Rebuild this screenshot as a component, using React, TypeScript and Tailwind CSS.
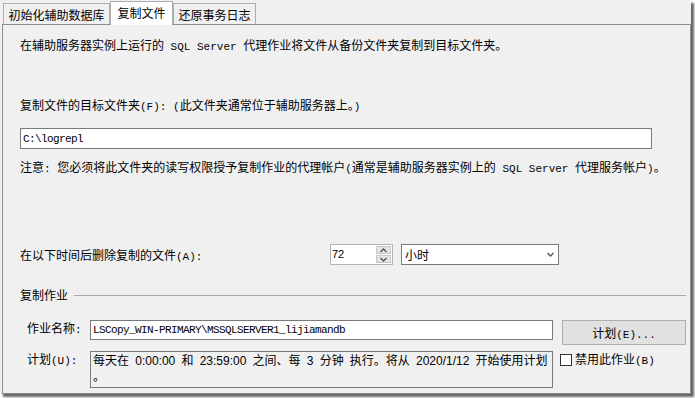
import React from "react";

const cjk = "font-['Noto_Sans_CJK_SC','Noto_Sans',sans-serif]";

function M({ children, tight = false }: { children: React.ReactNode; tight?: boolean }) {
  return (
    <span
      className={`font-['Liberation_Mono',monospace] text-[11px] leading-[16px] ${
        tight ? "tracking-[-0.6px]" : ""
      }`}
    >
      {children}
    </span>
  );
}

function S({ children }: { children: React.ReactNode }) {
  return <span className="font-['Liberation_Sans',sans-serif] leading-[14px]">{children}</span>;
}

function Chevron({ up = false }: { up?: boolean }) {
  return (
    <svg width="7" height="5" viewBox="0 0 7 5">
      <path
        d={up ? "M0.5 4 L3.5 1 L6.5 4" : "M0.5 1 L3.5 4 L6.5 1"}
        fill="none"
        stroke="#555"
        strokeWidth="1.4"
      />
    </svg>
  );
}

export default function App() {
  return (
    <div className={`w-[695px] h-[398px] bg-white text-[12px] leading-[16px] text-black ${cjk}`}>
      <div className="w-[691px] h-[394px] bg-[#f0f0f0] flex flex-col shadow-[3px_3px_2px_rgba(0,0,0,0.6)]">
        {/* tabs */}
        <div className="relative z-10 flex items-end h-[24px] pl-[3px]">
          <div className="w-[107px] h-[21px] border border-b-0 border-[#adadad] flex items-center justify-center pt-[1px]">
            初始化辅助数据库
          </div>
          <div className="w-[63px] h-[24px] -mb-px bg-white border border-b-0 border-[#adadad] flex items-start justify-center pt-[3px]">
            复制文件
          </div>
          <div className="w-[83px] h-[21px] border border-b-0 border-[#adadad] flex items-center justify-center pt-[1px]">
            还原事务日志
          </div>
        </div>

        {/* panel */}
        <div className="ml-[2px] w-[689px] h-[370px] border border-[#8e8e8e] flex flex-col pl-[17px]">
          <div className="mt-[12px] h-[16px] whitespace-nowrap">
            在辅助服务器实例上运行的<M> SQL Server </M>代理作业将文件从备份文件夹复制到目标文件夹。
          </div>
          <div className="mt-[44px] h-[16px] whitespace-nowrap">
            复制文件的目标文件夹<M>(F): (</M>此文件夹通常位于辅助服务器上。<M>)</M>
          </div>
          <div className="mt-[15px] w-[632px] h-[21px] shrink-0 bg-white border border-[#7a7a7a] flex items-center pl-[2px]">
            <M tight>C:\logrepl</M>
          </div>
          <div className="mt-[10px] h-[16px] whitespace-nowrap">
            注意<M>: </M>您必须将此文件夹的读写权限授予复制作业的代理帐户<M>(</M>通常是辅助服务器实例上的<M> SQL Server </M>代理服务帐户<M>)</M>。
          </div>

          <div className="mt-[69px] flex items-center h-[21px] shrink-0">
            <span className="w-[310px] h-[16px] whitespace-nowrap">
              在以下时间后删除复制的文件<M>(A):</M>
            </span>
            <div className="w-[63px] h-[21px] bg-white border border-[#b4b4b4] flex">
              <span className="flex-1 pl-[1px] leading-[19px] text-[11px] font-['Liberation_Sans',sans-serif]">
                72
              </span>
              <div className="w-[16px] flex flex-col gap-px py-px pr-px">
                <div className="flex-1 bg-[#e3e3e3] border border-[#c8c8c8] flex items-center justify-center">
                  <Chevron up />
                </div>
                <div className="flex-1 bg-[#e3e3e3] border border-[#c8c8c8] flex items-center justify-center">
                  <Chevron />
                </div>
              </div>
            </div>
            <div className="ml-[8px] w-[158px] h-[21px] bg-white border border-[#7a7a7a] flex items-center pl-[3px] pr-[4px]">
              <span className="flex-1 h-[16px]">小时</span>
              <Chevron />
            </div>
          </div>

          {/* group */}
          <div className="mt-[22px] h-[16px] flex items-center mr-[4px]">
            <span>复制作业</span>
            <div className="flex-1 ml-[6px] border-t border-[#a8a8a8]" />
          </div>

          <div className="mt-[17px] pl-[7px] flex items-start h-[25px] shrink-0">
            <span className="w-[63px] h-[16px]">
              作业名称<M>:</M>
            </span>
            <div className="w-[463px] h-[20px] bg-white border border-[#7a7a7a] flex items-center pl-[2px] whitespace-nowrap overflow-hidden">
              <M tight>LSCopy_WIN-PRIMARY\MSSQLSERVER1_lijiamandb</M>
            </div>
            <div className="ml-[9px] w-[124px] h-[25px] bg-[#e1e1e1] border border-[#adadad] flex items-center justify-center">
              <span className="h-[16px]">
                计划<M>(E)...</M>
              </span>
            </div>
          </div>

          <div className="mt-[6px] pl-[7px] flex items-start h-[37px] shrink-0">
            <span className="w-[63px] h-[16px]">
              计划<M>(U):</M>
            </span>
            <div className="w-[463px] h-[37px] border border-[#7a7a7a] pl-[2px] leading-[15px] whitespace-nowrap [word-spacing:3.5px] overflow-hidden">
              每天在 <S>0:00:00</S> 和 <S>23:59:00</S> 之间、每 <S>3</S> 分钟 执行。将从 <S>2020/1/12</S> 开始使用计划
              <br />。
            </div>
            <div className="ml-[7px] mt-[3px] w-[12px] h-[12px] bg-white border border-[#333]" />
            <span className="ml-[3px] h-[16px]">
              禁用此作业<M>(B)</M>
            </span>
          </div>
        </div>
      </div>
    </div>
  );
}
